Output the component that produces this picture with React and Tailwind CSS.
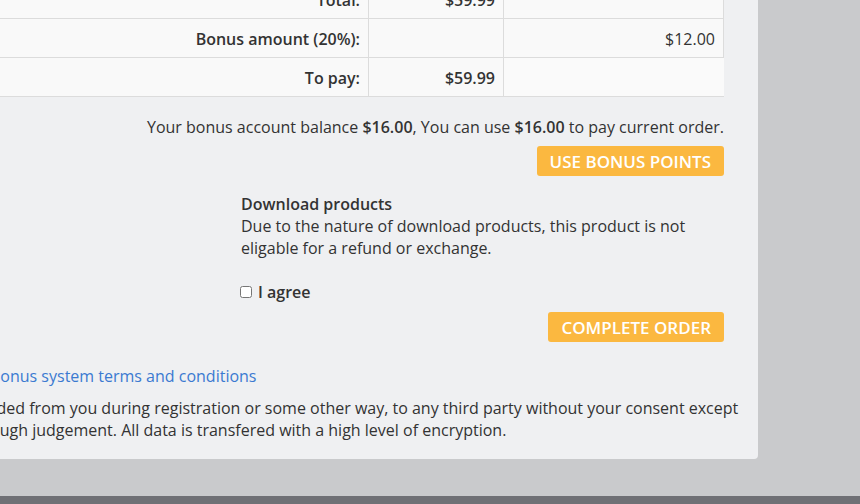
import React from "react";

const rows = [
  { label: "Total:", amount: "$59.99", bonus: "" },
  { label: "Bonus amount (20%):", amount: "", bonus: "$12.00" },
  { label: "To pay:", amount: "$59.99", bonus: "", last: true },
];

function OrangeButton({ children }) {
  return (
    <button className="h-[30px] px-[13px] rounded-[3px] bg-[#fbb840] text-white text-[17px] font-semibold uppercase leading-none">
      {children}
    </button>
  );
}

export default function App() {
  return (
    <div
      className="w-[860px] h-[504px] bg-[#c9cacc] flex flex-col overflow-hidden text-[#333] text-[16px] leading-[22px]"
      style={{ fontFamily: '"Open Sans", "Liberation Sans", sans-serif' }}
    >
      {/* Order panel */}
      <div className="w-[758px] h-[459px] shrink-0 bg-[#eff0f2] rounded-br-[4px] overflow-hidden">
        <div className="ml-[-32px] mr-[34px]">
          {/* Totals table */}
          <table className="mt-[-21px] w-full table-fixed border-collapse bg-[#f9f9f9]">
            <colgroup>
              <col className="w-[400px]" />
              <col className="w-[135px]" />
              <col />
            </colgroup>
            <tbody>
              {rows.map((row) => (
                <tr key={row.label} className="h-[39px]">
                  <td className="border border-[#dcdcdc] px-2 pt-px text-right font-semibold">{row.label}</td>
                  <td className="border border-[#dcdcdc] px-2 pt-px text-right font-semibold">{row.amount}</td>
                  <td
                    className={`border border-[#dcdcdc] px-2 pt-px text-right ${
                      row.last ? "border-r-transparent bg-[#fafafa]" : ""
                    }`}
                  >
                    {row.bonus}
                  </td>
                </tr>
              ))}
            </tbody>
          </table>

          {/* Bonus balance */}
          <p className="mt-[19px] text-right">
            Your bonus account balance <b className="font-semibold">$16.00</b>, You can use{" "}
            <b className="font-semibold">$16.00</b> to pay current order.
          </p>
          <div className="mt-[8px] flex justify-end">
            <OrangeButton>Use bonus points</OrangeButton>
          </div>

          {/* Download notice */}
          <div className="mt-[17px] flex justify-end">
            <div className="w-[483px]">
              <div className="font-semibold">Download products</div>
              <p>
                Due to the nature of download products, this product is not
                <br />
                eligable for a refund or exchange.
              </p>
              <label className="mt-[22px] flex items-center gap-[6px] font-semibold">
                <input type="checkbox" className="w-[12px] h-[12px] ml-[-1px] accent-[#999]" />
                I agree
              </label>
            </div>
          </div>
          <div className="mt-[9px] flex justify-end">
            <OrangeButton>Complete order</OrangeButton>
          </div>

          {/* Terms */}
          <div className="mt-[23px] pl-[22px]">
            <a href="#" className="text-[#3b7ad1]">
              Bonus system terms and conditions
            </a>
          </div>
          <p className="mt-[10px] mr-[-20px] whitespace-nowrap">
            handed from you during registration or some other way, to any third party without your consent except
            <br />
            through judgement. All data is transfered with a high level of encryption.
          </p>
        </div>
      </div>

      {/* Footer strip */}
      <div className="mt-auto h-[8px] bg-[#6f7075]" />
    </div>
  );
}
